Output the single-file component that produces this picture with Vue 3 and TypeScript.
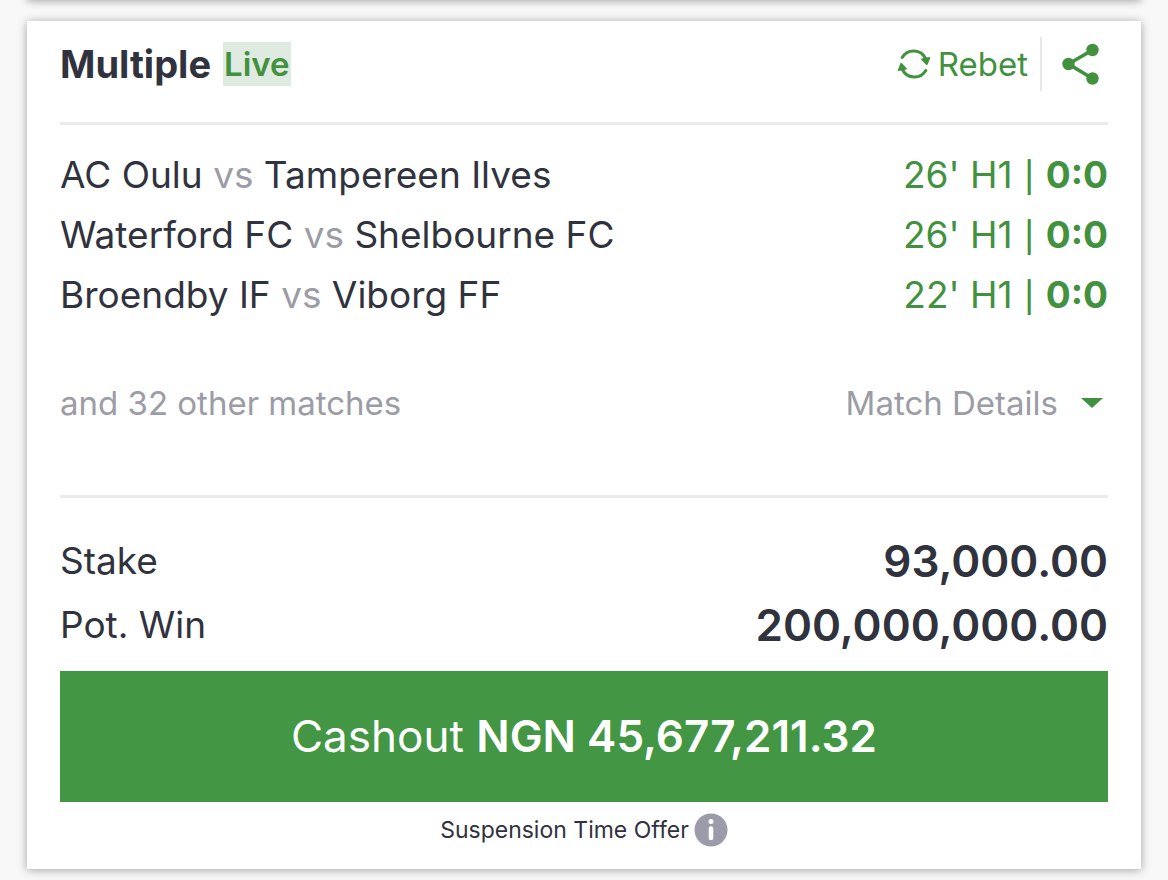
<script setup lang="ts">
interface Match {
  home: string
  away: string
  clock: string
  score: string
}

const matches: Match[] = [
  { home: 'AC Oulu', away: 'Tampereen Ilves', clock: "26' H1", score: '0:0' },
  { home: 'Waterford FC', away: 'Shelbourne FC', clock: "26' H1", score: '0:0' },
  { home: 'Broendby IF', away: 'Viborg FF', clock: "22' H1", score: '0:0' },
]

const amounts = [
  { label: 'Stake', value: '93,000.00' },
  { label: 'Pot. Win', value: '200,000,000.00' },
]
</script>

<template>
  <main class="page">
    <div class="previous" aria-hidden="true"></div>
    <article class="ticket">
      <header class="head">
        <h1 class="title">Multiple</h1>
        <span class="live">Live</span>
        <div class="actions">
          <button type="button" class="rebet">
            <svg class="rebet-icon" viewBox="0 0 34 34" aria-hidden="true">
              <g fill="none" stroke="currentColor" stroke-width="3" stroke-linecap="round">
                <path d="M5.200 10.500A13.300 13.300 0 0 1 28.600 11.500" />
                <path d="M28.800 23.500A13.300 13.300 0 0 1 5.400 22.500" />
              </g>
              <path d="M24.800 12.200 32.600 10.800 29.800 17.400Z" fill="currentColor" stroke="currentColor" stroke-width="1.4" stroke-linejoin="round" />
              <path d="M9.200 21.800 1.400 23.200 4.200 16.600Z" fill="currentColor" stroke="currentColor" stroke-width="1.4" stroke-linejoin="round" />
            </svg>
            Rebet
          </button>
          <button type="button" class="share" aria-label="Share">
            <svg class="share-icon" viewBox="0 0 40 42" aria-hidden="true">
              <path d="M32.500 7 8.500 21l24 14.500" fill="none" stroke="currentColor" stroke-width="3.600" />
              <g fill="currentColor">
                <circle cx="8.500" cy="21" r="6.200" />
                <circle cx="32.500" cy="7" r="6.200" />
                <circle cx="32.500" cy="35.500" r="6.200" />
              </g>
            </svg>
          </button>
        </div>
      </header>

      <section class="matches">
        <ul class="list">
          <li v-for="match in matches" :key="match.home" class="match">
            <span>{{ match.home }} <span class="versus">vs</span> {{ match.away }}</span>
            <span class="status">{{ match.clock }} <span class="bar">|</span> <b>{{ match.score }}</b></span>
          </li>
        </ul>
        <div class="more">
          <span>and 32 other matches</span>
          <button type="button" class="details">
            Match Details
            <svg class="caret" viewBox="0 0 22 10" aria-hidden="true">
              <path d="M0 0h22L11 10Z" fill="currentColor" />
            </svg>
          </button>
        </div>
      </section>

      <dl class="amounts">
        <div v-for="amount in amounts" :key="amount.label" class="amount">
          <dt>{{ amount.label }}</dt>
          <dd>{{ amount.value }}</dd>
        </div>
      </dl>

      <button type="button" class="cashout">Cashout <b>NGN 45,677,211.32</b></button>

      <footer class="offer">
        <span>Suspension Time Offer</span>
        <button type="button" class="info" aria-label="About this offer">
          <svg class="info-icon" viewBox="0 0 34 34" aria-hidden="true">
            <circle cx="17" cy="17" r="16.500" fill="#9b9ba9" />
            <circle cx="17" cy="8.500" r="2.500" fill="#fff" />
            <path d="M17 15.500v9.500" stroke="#fff" stroke-width="4.600" stroke-linecap="round" />
          </svg>
        </button>
      </footer>
    </article>
  </main>
</template>

<style>
body {
  margin: 0;
  background: #f8f8f8;
}
</style>

<style scoped>
.page {
  box-sizing: border-box;
  min-height: 100vh;
  padding: 0 27px 10px;
  overflow: hidden;
  font-family: Inter, "Liberation Sans", sans-serif;
  color: #30333d;
}

.previous {
  height: 20px;
  margin-top: -20px;
  margin-bottom: 21px;
  background: #fff;
  box-shadow: 0 1px 9px rgba(0, 0, 0, 0.35);
}

.ticket {
  padding: 0 33px 20px;
  background: #fff;
  box-shadow: 0 1px 9px rgba(0, 0, 0, 0.35);
}

button {
  margin: 0;
  padding: 0;
  border: 0;
  background: none;
  font: inherit;
  color: inherit;
  cursor: pointer;
}

.head {
  display: flex;
  align-items: center;
  height: 86px;
  padding-bottom: 15px;
  border-bottom: 3px solid #ebebec;
}

.title {
  margin: 0;
  font-size: 38px;
  font-weight: 700;
}

.live {
  margin-left: 12px;
  padding: 0 1px;
  background: #dfeae0;
  color: #42913f;
  font-size: 33px;
  font-weight: 600;
  line-height: 44px;
}

.actions {
  display: flex;
  align-items: center;
  margin-left: auto;
  color: #42913f;
}

.rebet {
  display: flex;
  align-items: center;
  gap: 7px;
  padding-right: 12px;
  font-size: 33px;
  line-height: 54px;
}

.rebet-icon {
  width: 34px;
  height: 34px;
}

.share {
  display: flex;
  align-items: center;
  height: 54px;
  padding: 0 8px 0 18px;
  border-left: 2px solid #e7e7e8;
}

.share-icon {
  width: 40px;
  height: 42px;
}

.matches {
  padding: 20px 0 70px;
  border-bottom: 3px solid #ebebec;
}

.list {
  margin: 0;
  padding: 0;
  list-style: none;
}

.match {
  display: flex;
  justify-content: space-between;
  font-size: 37px;
  line-height: 60px;
}

.versus {
  color: #9b9ca5;
}

.status {
  color: #42913f;
}

.status b {
  font-weight: 700;
}

.bar {
  padding: 0 1px;
  font-size: 30px;
  font-weight: 500;
  line-height: 1;
}

.more {
  display: flex;
  justify-content: space-between;
  margin-top: 56px;
  color: #9b9ca5;
  font-size: 33px;
  line-height: 44px;
}

.details {
  display: flex;
  align-items: center;
  gap: 23px;
  padding-right: 5px;
}

.caret {
  width: 22px;
  height: 10px;
  color: #42913f;
}

.amounts {
  margin: 0;
  padding: 31px 0 14px;
}

.amount {
  display: flex;
  align-items: center;
  justify-content: space-between;
  font-size: 37px;
  line-height: 64px;
}

.amount dd {
  margin: 0;
  font-size: 44px;
  font-weight: 600;
}

.cashout {
  display: block;
  width: 100%;
  background: #439643;
  color: #fff;
  font-size: 44px;
  line-height: 131px;
}

.cashout b {
  font-weight: 600;
}

.offer {
  display: flex;
  align-items: center;
  justify-content: center;
  gap: 5px;
  padding-top: 9px;
  font-size: 23px;
  line-height: 38px;
}

.info {
  display: flex;
}

.info-icon {
  width: 34px;
  height: 34px;
}
</style>
